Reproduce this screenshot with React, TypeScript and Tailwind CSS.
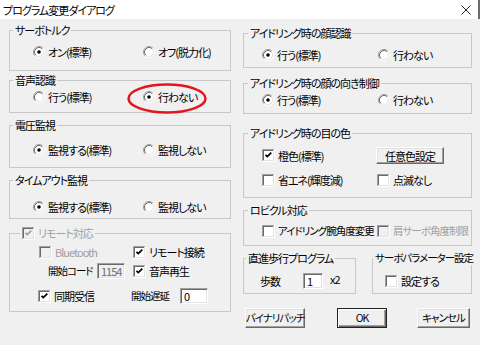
import type { ReactNode } from 'react';

function Radio({ checked }: { checked?: boolean }) {
  return (
    <svg width="12" height="12" viewBox="0 0 12 12" className="shrink-0">
      <circle cx="6" cy="6" r="4.5" fill="#fff" />
      <path d="M2.11 9.89A5.5 5.5 0 0 1 9.89 2.11" fill="none" stroke="#a0a0a0" />
      <path d="M9.89 2.11A5.5 5.5 0 0 1 2.11 9.89" fill="none" stroke="#fff" />
      <path d="M2.82 9.18A4.5 4.5 0 0 1 9.18 2.82" fill="none" stroke="#696969" />
      <path d="M9.18 2.82A4.5 4.5 0 0 1 2.82 9.18" fill="none" stroke="#e3e3e3" />
      {checked && <circle cx="6" cy="6" r="1.8" fill="#000" />}
    </svg>
  );
}

function Check({ checked, disabled }: { checked?: boolean; disabled?: boolean }) {
  return (
    <svg width="13" height="13" viewBox="0 0 13 13" className="shrink-0">
      <rect x="0" y="0" width="13" height="13" fill="#fff" />
      <rect x="0" y="0" width="12" height="12" fill="#a0a0a0" />
      <rect x="1" y="1" width="11" height="11" fill="#e3e3e3" />
      <rect x="1" y="1" width="10" height="10" fill="#696969" />
      <rect x="2" y="2" width="9" height="9" fill={disabled ? '#f0f0f0' : '#fff'} />
      {checked && (
        <polyline
          points="3.5,5.8 5.3,7.6 9.3,3.6"
          fill="none"
          stroke={disabled ? '#a0a0a0' : '#000'}
          strokeWidth="1.8"
        />
      )}
    </svg>
  );
}

function RadioOpt({ label, checked, className = '' }: { label: string; checked?: boolean; className?: string }) {
  return (
    <label className={`flex h-[14px] items-center gap-[3px] ${className}`}>
      <Radio checked={checked} />
      <span className="whitespace-nowrap">{label}</span>
    </label>
  );
}

function CheckOpt({
  label,
  checked,
  disabled,
  className = '',
}: {
  label: string;
  checked?: boolean;
  disabled?: boolean;
  className?: string;
}) {
  return (
    <label className={`flex h-[14px] items-center gap-[3px] ${disabled ? 'text-[#a0a0a0]' : ''} ${className}`}>
      <Check checked={checked} disabled={disabled} />
      <span className="whitespace-nowrap">{label}</span>
    </label>
  );
}

function Group({
  title,
  className = '',
  legendClass = 'ml-[3px]',
  children,
}: {
  title: ReactNode;
  className?: string;
  legendClass?: string;
  children: ReactNode;
}) {
  return (
    <fieldset className={`min-w-0 border border-[#c8c8c8] ${className}`}>
      <legend className={`whitespace-nowrap px-[2px] leading-[14px] ${legendClass}`}>{title}</legend>
      {children}
    </fieldset>
  );
}

function Field({ value, disabled, className = '' }: { value: string; disabled?: boolean; className?: string }) {
  return (
    <div
      className={`flex h-[16px] items-center border border-t-[#a0a0a0] border-l-[#a0a0a0] border-b-white border-r-white pl-[3px] shadow-[inset_1px_1px_0_#696969,inset_-1px_-1px_0_#e3e3e3] ${
        disabled ? 'bg-[#f0f0f0] text-[#6d6d6d]' : 'bg-white'
      } ${className}`}
    >
      {value}
    </div>
  );
}

function Btn({ label, primary, className = '' }: { label: string; primary?: boolean; className?: string }) {
  return (
    <button
      className={`flex h-full items-center justify-center whitespace-nowrap bg-[#f0f0f0] ${
        primary
          ? 'border border-[#222] shadow-[inset_1px_1px_0_#fff,inset_-1px_-1px_0_#696969,inset_-2px_-2px_0_#a0a0a0]'
          : 'border border-t-white border-l-white border-b-[#696969] border-r-[#696969] shadow-[inset_-1px_-1px_0_#a0a0a0,inset_1px_1px_0_#e3e3e3]'
      } ${className}`}
    >
      {label}
    </button>
  );
}

export default function App() {
  return (
    <div className="relative h-[345px] w-[480px] overflow-hidden bg-[#f0f0f0] font-['Noto_Sans_CJK_JP','Noto_Sans',sans-serif] text-[11px] leading-[14px] tracking-[-1px] text-black [font-feature-settings:'palt']">
      {/* title bar */}
      <div className="flex h-[19px] items-center bg-white pl-[3px]">
        <span>プログラム変更ダイアログ</span>
        <svg width="10" height="10" viewBox="0 0 10 10" className="ml-auto mr-[7px]">
          <path d="M0.5 0.5L9.5 9.5M9.5 0.5L0.5 9.5" stroke="#222" strokeWidth="1" />
        </svg>
        <div className="w-[2px] self-stretch bg-[#6b6b6b]" />
      </div>

      <div className="flex gap-[12px] pl-[9px]">
        {/* left column */}
        <div className="flex w-[222px] flex-col pt-[4px]">
          <Group title="サーボトルク" className="h-[48px]">
            <div className="flex pl-[23px] pt-[8px]">
              <RadioOpt label="オン(標準)" checked className="w-[110px]" />
              <RadioOpt label="オフ(脱力化)" />
            </div>
          </Group>
          <Group title="音声認識" className="mt-[2px] h-[40px]">
            <div className="flex pl-[23px] pt-[3px]">
              <RadioOpt label="行う(標準)" className="w-[110px]" />
              <RadioOpt label="行わない" checked />
            </div>
          </Group>
          <Group title="電圧監視" className="mt-[5px] h-[50px]">
            <div className="flex pl-[23px] pt-[11px]">
              <RadioOpt label="監視する(標準)" checked className="w-[110px]" />
              <RadioOpt label="監視しない" />
            </div>
          </Group>
          <Group title="タイムアウト監視" className="mt-[5px] h-[46px]">
            <div className="flex pl-[23px] pt-[13px]">
              <RadioOpt label="監視する(標準)" checked className="w-[110px]" />
              <RadioOpt label="監視しない" />
            </div>
          </Group>
          <Group
            title={<CheckOpt label="リモート対応" checked disabled />}
            legendClass="ml-[10px] px-[1px]"
            className="mt-[7px] h-[86px]"
          >
            <div className="flex flex-col">
              <div className="flex pl-[29px] pt-[5px]">
                <CheckOpt label="Bluetooth" disabled className="w-[94px]" />
                <CheckOpt label="リモート接続" checked />
              </div>
              <div className="mt-[4px] flex h-[16px] items-center pl-[38px]">
                <span className="w-[49px] text-[10.5px]">開始コード</span>
                <Field value="1154" disabled className="w-[28px]" />
                <CheckOpt label="音声再生" checked className="ml-[8px]" />
              </div>
              <div className="mt-[9px] flex h-[16px] items-center pl-[28px]">
                <CheckOpt label="同期受信" checked className="w-[93px]" />
                <span className="w-[49px] text-[10.5px]">開始遅延</span>
                <Field value="0" className="w-[28px]" />
              </div>
            </div>
          </Group>
        </div>

        {/* right column */}
        <div className="flex w-[229px] flex-col pt-[7px]">
          <Group title="アイドリング時の顔認識" legendClass="ml-[4px]" className="h-[42px]">
            <div className="flex pl-[18px] pt-[8px]">
              <RadioOpt label="行う(標準)" checked className="w-[116px]" />
              <RadioOpt label="行わない" />
            </div>
          </Group>
          <Group title="アイドリング時の顔の向き制御" legendClass="ml-[4px]" className="mt-[8px] h-[38px]">
            <div className="flex pl-[18px] pt-[3px]">
              <RadioOpt label="行う(標準)" checked className="w-[116px]" />
              <RadioOpt label="行わない" />
            </div>
          </Group>
          <Group title="アイドリング時の目の色" legendClass="ml-[4px]" className="mt-[12px] h-[72px]">
            <div className="flex flex-col pl-[18px] pt-[7px]">
              <div className="flex h-[17px] items-center">
                <CheckOpt label="橙色(標準)" checked className="w-[114px]" />
                <Btn label="任意色設定" className="w-[68px]" />
              </div>
              <div className="mt-[9px] flex">
                <CheckOpt label="省エネ(輝度減)" className="w-[115px]" />
                <CheckOpt label="点滅なし" />
              </div>
            </div>
          </Group>
          <Group title="ロビクル対応" legendClass="ml-[4px]" className="mt-[5px] h-[43px]">
            <div className="flex pl-[18px] pt-[7px] text-[10.5px]">
              <CheckOpt label="アイドリング腕角度変更" className="w-[115px]" />
              <CheckOpt label="肩サーボ角度制限" disabled />
            </div>
          </Group>
          <div className="mt-[5px] flex h-[43px] gap-[16px]">
            <Group title="直進歩行プログラム" legendClass="ml-[2px]" className="h-full w-[113px]">
              <div className="mt-[8px] flex h-[16px] items-center pl-[16px]">
                <span className="w-[43px]">歩数</span>
                <Field value="1" className="w-[20px]" />
                <span className="-mt-[4px] ml-[7px]">x2</span>
              </div>
            </Group>
            <Group title="サーボパラメーター設定" legendClass="ml-0 text-[10.5px]" className="h-full flex-1">
              <div className="mt-[9px] flex pl-[12px]">
                <CheckOpt label="設定する" />
              </div>
            </Group>
          </div>
          <div className="mt-[14px] flex h-[20px] text-[10.5px]">
            <Btn label="バイナリパッチ" className="ml-[2px] w-[60px]" />
            <Btn label="OK" primary className="ml-[32px] w-[50px]" />
            <Btn label="キャンセル" className="ml-[30px] w-[53px]" />
          </div>
        </div>
      </div>

      {/* red annotation ring */}
      <svg width="82" height="33" viewBox="0 0 82 33" className="pointer-events-none absolute left-[126px] top-[82px]">
        <ellipse cx="41" cy="16.5" rx="38.5" ry="14" fill="none" stroke="#e3161d" strokeWidth="2.5" />
      </svg>
    </div>
  );
}
